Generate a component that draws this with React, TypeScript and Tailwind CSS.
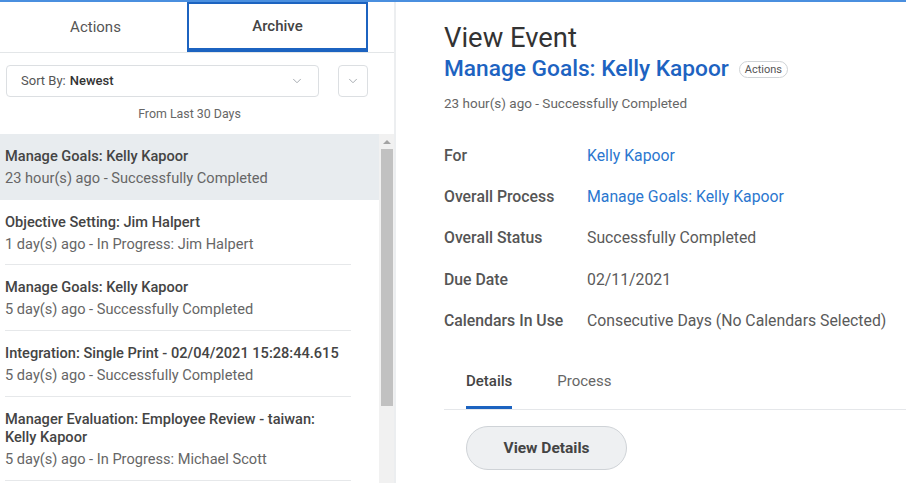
import { ChevronDown } from "lucide-react";

const items = [
  { title: ["Manage Goals: Kelly Kapoor"], sub: "23 hour(s) ago - Successfully Completed", selected: true },
  { title: ["Objective Setting: Jim Halpert"], sub: "1 day(s) ago - In Progress: Jim Halpert" },
  { title: ["Manage Goals: Kelly Kapoor"], sub: "5 day(s) ago - Successfully Completed" },
  { title: ["Integration: Single Print - 02/04/2021 15:28:44.615"], sub: "5 day(s) ago - Successfully Completed" },
  { title: ["Manager Evaluation: Employee Review - taiwan:", "Kelly Kapoor"], sub: "5 day(s) ago - In Progress: Michael Scott" },
];

const fields = [
  { label: "For", value: "Kelly Kapoor", link: true },
  { label: "Overall Process", value: "Manage Goals: Kelly Kapoor", link: true },
  { label: "Overall Status", value: "Successfully Completed" },
  { label: "Due Date", value: "02/11/2021" },
  { label: "Calendars In Use", value: "Consecutive Days (No Calendars Selected)" },
];

function InboxList() {
  return (
    <div className="flex flex-1 min-h-0">
      <div className="w-[379px] flex flex-col">
        {items.map((it, i) => (
          <div key={i} className={it.selected ? "bg-[#e8ecef]" : ""}>
            <div className={`pl-[5px] pt-[13px] ${i === 1 ? "pb-[11px]" : "pb-[12px]"}`}>
              {it.title.map((t, j) => (
                <div key={j} className="text-[14.6px] leading-[18px] font-medium text-[#444]">
                  {t}
                </div>
              ))}
              <div className="mt-[4px] text-[14.6px] leading-[18px] text-[#666]">{it.sub}</div>
            </div>
            <div className={`ml-[5px] w-[346px] h-px ${it.selected ? "bg-transparent" : "bg-[#e6e8ea]"}`} />
          </div>
        ))}
      </div>
      {/* scrollbar */}
      <div className="w-[15px] bg-[#f1f1f1] flex flex-col items-center">
        <div className="h-[15px] flex items-center justify-center">
          <div className="w-0 h-0 border-l-[4px] border-r-[4px] border-b-[4px] border-l-transparent border-r-transparent border-b-[#a3a3a3]" />
        </div>
        <div className="w-[12px] h-[257px] bg-[#c1c1c1]" />
      </div>
    </div>
  );
}

export default function App() {
  return (
    <div
      className="w-[906px] h-[483px] overflow-hidden bg-white border-t-2 border-[#4a8fdf] flex"
      style={{ fontFamily: "Roboto, 'Noto Sans', sans-serif" }}
    >
      {/* Left panel */}
      <div className="w-[396px] border-r-2 border-[#eceef0] flex flex-col">
        <div className="h-[51px] flex border-b border-[#e3e6e8] shrink-0">
          <div className="w-[187px] flex items-center justify-center pl-[4px] text-[15px] text-[#555]">Actions</div>
          <div className="w-[181px] border-2 border-b-[4px] border-[#1c63c0] flex items-center justify-center text-[15px] font-medium text-[#444]">
            Archive
          </div>
        </div>

        <div className="flex items-center pt-[12px] pl-[6px] shrink-0">
          <div className="w-[313px] h-[32px] rounded-[4px] border border-[#dcdfe2] flex items-center px-[14px] text-[13px]">
            <span className="text-[#555]">Sort By:</span>
            <span className="ml-[4px] font-medium text-[#333]">Newest</span>
            <ChevronDown className="ml-auto w-[14px] h-[14px] text-[#9aa0a6]" strokeWidth={1.5} />
          </div>
          <div className="ml-[19px] w-[30px] h-[32px] rounded-[4px] border border-[#dcdfe2] flex items-center justify-center">
            <ChevronDown className="w-[14px] h-[14px] text-[#9aa0a6]" strokeWidth={1.5} />
          </div>
        </div>

        <div className="w-[379px] text-center text-[12.4px] leading-[16px] text-[#666] mt-[9px] mb-[12px] shrink-0">
          From Last 30 Days
        </div>

        <InboxList />
      </div>

      {/* Right panel */}
      <div className="flex-1 pl-[48px] pt-[20px] flex flex-col">
        <h1 className="text-[27.4px] leading-[32px] text-[#333]">View Event</h1>
        <div className="flex items-center h-[28px] mt-[1px]">
          <span className="text-[22.7px] font-medium text-[#1d63c1]">Manage Goals: Kelly Kapoor</span>
          <span className="ml-[10px] h-[17px] px-[5px] rounded-full border border-[#cfd3d6] text-[11px] leading-[15px] text-[#555]">
            Actions
          </span>
        </div>
        <div className="mt-[11px] text-[13.5px] leading-[18px] text-[#666]">23 hour(s) ago - Successfully Completed</div>

        <div className="mt-[23px] flex flex-col">
          {fields.map((f) => (
            <div key={f.label} className="h-[41.25px] flex items-center text-[15.8px]">
              <div className="w-[143px] font-medium text-[#555]">{f.label}</div>
              <div className={f.link ? "text-[#2b77cf]" : "text-[#5a5a5a]"}>{f.value}</div>
            </div>
          ))}
        </div>

        <div className="mt-[16px] h-[53px] flex border-b border-[#e5e7ea] pl-[22px] gap-[45px]">
          <div className="flex flex-col justify-between">
            <div className="pt-[15px] text-[15px] leading-[18px] font-medium text-[#444]">Details</div>
            <div className="h-[3px] bg-[#1c63c0]" />
          </div>
          <div className="pt-[15px] text-[15px] leading-[18px] text-[#666]">Process</div>
        </div>

        <div className="mt-[16px] ml-[22px] w-[161px] h-[44px] rounded-full bg-[#eef0f2] border border-[#cfd3d7] flex items-center justify-center text-[15.5px] font-bold text-[#444]">
          View Details
        </div>
      </div>
    </div>
  );
}
